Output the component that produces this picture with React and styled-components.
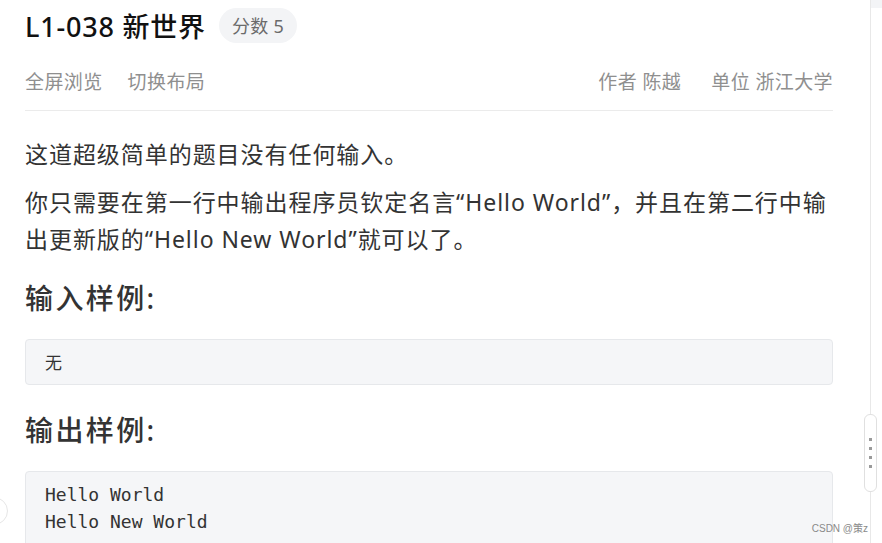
import React from 'react'
import styled, { createGlobalStyle } from 'styled-components'

const Global = createGlobalStyle`
  html, body {
    margin: 0;
    padding: 0;
    background: #fff;
    overflow: hidden;
  }
  body {
    font-family: "Noto Sans", "Noto Sans CJK SC", sans-serif;
    color: #333;
  }
`

const Page = styled.div`
  position: relative;
  display: flex;
  width: 882px;
  height: 543px;
  overflow: hidden;
`

const Content = styled.div`
  width: 808px;
  margin-left: 25px;
  flex-shrink: 0;
`

const TitleRow = styled.div`
  display: flex;
  align-items: center;
  height: 50px;
  gap: 13px;
`

const Title = styled.h1`
  margin: 0;
  font-size: 27px;
  font-weight: 500;
  color: #111;
  letter-spacing: 0.8px;
`

const Badge = styled.span`
  display: inline-flex;
  align-items: center;
  height: 35px;
  padding: 0 13px;
  border-radius: 18px;
  background: #f3f4f6;
  color: #6b6b6b;
  font-size: 18px;
  letter-spacing: 0.3px;
`

const MetaRow = styled.div`
  display: flex;
  justify-content: space-between;
  padding: 14px 0 10px;
  line-height: 36px;
  border-bottom: 1px solid #ebebeb;
  font-size: 19px;
  letter-spacing: 0.4px;
  color: #8f8f8f;
`

const MetaGroup = styled.div`
  display: flex;
  gap: ${(p) => p.gap}px;
`

const Para = styled.p`
  margin: ${(p) => p.top}px 0 0;
  font-size: 23px;
  letter-spacing: 0.95px;
  line-height: 37px;
  color: #333;
`

const Heading = styled.h2`
  margin: ${(p) => p.top}px 0 0;
  font-size: 28px;
  letter-spacing: 2.4px;
  line-height: 40px;
  font-weight: 500;
  color: #333;
`

const Sample = styled.pre`
  margin: 21px 0 0;
  padding: ${(p) => (p.mono ? '9px 19px' : '0 19px')};
  background: #f5f6f8;
  border: 1px solid #e6e8eb;
  border-radius: 4px;
  font-family: ${(p) =>
    p.mono ? '"DejaVu Sans Mono", monospace' : '"Noto Sans CJK SC", sans-serif'};
  font-size: ${(p) => (p.mono ? 18 : 17)}px;
  line-height: ${(p) => (p.mono ? 27 : 44)}px;
  color: #333;
  white-space: pre;
`

const Side = styled.div`
  position: absolute;
  left: 870px;
  top: 0;
  bottom: 0;
  width: 12px;
  border-left: 1px solid #e8e8e8;
`

const SideCap = styled.div`
  height: 8px;
  background: #f3f4f6;
`

const Handle = styled.div`
  position: absolute;
  left: -7px;
  top: 414px;
  width: 11px;
  height: 76px;
  border: 1px solid #e0e0e0;
  border-radius: 6px;
  background: #fff;
  display: flex;
  flex-direction: column;
  align-items: center;
  justify-content: center;
  gap: 6px;
`

const Dot = styled.span`
  width: 3px;
  height: 3px;
  background: #9a9a9a;
`

const EdgeCircle = styled.div`
  position: absolute;
  left: -20px;
  top: 497px;
  width: 26px;
  height: 26px;
  border: 1px solid #e6e6e6;
  border-radius: 50%;
  background: #fff;
`

const Watermark = styled.div`
  position: absolute;
  right: 14px;
  bottom: 8px;
  font-family: "Liberation Sans", "Noto Sans CJK SC", sans-serif;
  font-size: 10px;
  color: #8a8a8a;
`

export default function App() {
  return (
    <Page>
      <Global />
      <Content>
        <TitleRow>
          <Title>L1-038 新世界</Title>
          <Badge>分数 5</Badge>
        </TitleRow>
        <MetaRow>
          <MetaGroup gap={25}>
            <span>全屏浏览</span>
            <span>切换布局</span>
          </MetaGroup>
          <MetaGroup gap={30}>
            <span>作者 陈越</span>
            <span>单位 浙江大学</span>
          </MetaGroup>
        </MetaRow>
        <Para top={25}>这道超级简单的题目没有任何输入。</Para>
        <Para top={11}>
          你只需要在第一行中输出程序员钦定名言“Hello World”，并且在第二行中输出更新版的“Hello New World”就可以了。
        </Para>
        <Heading top={20}>输入样例:</Heading>
        <Sample>无</Sample>
        <Heading top={25}>输出样例:</Heading>
        <Sample mono>{'Hello World\nHello New World\n\n'}</Sample>
      </Content>
      <Side>
        <SideCap />
        <Handle>
          <Dot />
          <Dot />
          <Dot />
          <Dot />
        </Handle>
      </Side>
      <EdgeCircle />
      <Watermark>CSDN @策z</Watermark>
    </Page>
  )
}
